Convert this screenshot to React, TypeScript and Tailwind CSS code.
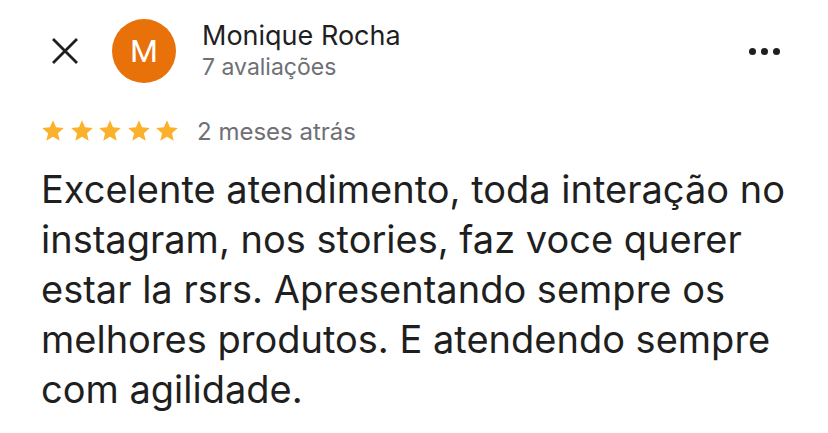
const lines = [
  "Excelente atendimento, toda interação no",
  "instagram, nos stories, faz voce querer",
  "estar la rsrs. Apresentando sempre os",
  "melhores produtos. E atendendo sempre",
  "com agilidade.",
];

const Star = () => (
  <svg viewBox="0 0 24 24" className="h-[26px] w-[26px]">
    <path
      fill="#fbb12b"
      d="M12 17.27L18.18 21l-1.64-7.03L22 9.24l-7.19-.61L12 2 9.19 8.63 2 9.24l5.46 4.73L5.82 21z"
    />
  </svg>
);

export default function App() {
  return (
    <div className="h-[433px] w-[828px] overflow-hidden bg-white font-['Inter',sans-serif] text-[#1f1f1f]">
      <header className="flex items-center pl-[51px] pr-[48px] pt-[19px]">
        <svg viewBox="0 0 28 28" className="h-[28px] w-[28px]">
          <path d="M2 2L26 26M26 2L2 26" stroke="#1f1f1f" strokeWidth={2.8} />
        </svg>
        <div className="ml-[33px] flex h-[64px] w-[64px] items-center justify-center rounded-full bg-[#e8710a] font-['Roboto',sans-serif] text-[32px] text-white">
          M
        </div>
        <div className="ml-[26px] flex flex-col">
          <span className="text-[27px] leading-[32px]">Monique Rocha</span>
          <span className="text-[23px] leading-[30px] text-[#6f7075]">7 avaliações</span>
        </div>
        <div className="ml-auto flex gap-[5px]">
          <span className="h-[7px] w-[7px] rounded-full bg-[#1f1f1f]" />
          <span className="h-[7px] w-[7px] rounded-full bg-[#1f1f1f]" />
          <span className="h-[7px] w-[7px] rounded-full bg-[#1f1f1f]" />
        </div>
      </header>

      <div className="mt-[34px] flex h-[30px] items-center pl-[40px]">
        <div className="-mt-[2px] flex gap-[2.5px]">
          <Star />
          <Star />
          <Star />
          <Star />
          <Star />
        </div>
        <span className="ml-[17px] text-[24px] leading-[30px] text-[#6f7075]">2 meses atrás</span>
      </div>

      <p className="mt-[17px] pl-[41px] text-[38px] leading-[50px]">
        {lines.map((line) => (
          <span key={line} className="block whitespace-nowrap">
            {line}
          </span>
        ))}
      </p>
    </div>
  );
}
